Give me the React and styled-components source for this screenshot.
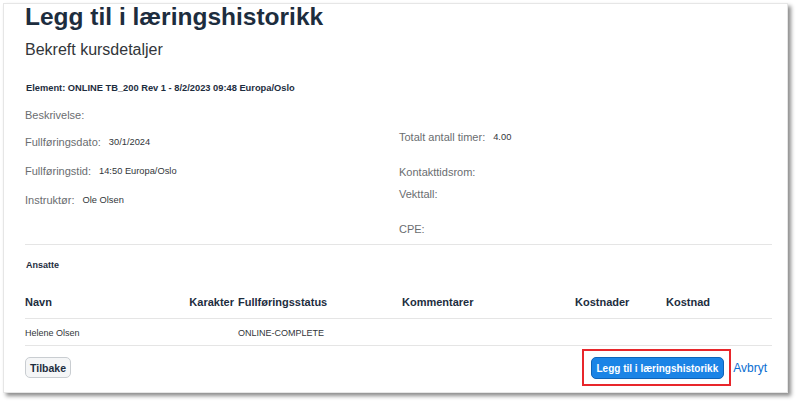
import styled, { createGlobalStyle } from "styled-components";

const GlobalStyle = createGlobalStyle`
  html, body {
    margin: 0;
    padding: 0;
    background: #ffffff;
  }
  body {
    font-family: "Liberation Sans", Arial, sans-serif;
    color: #32363a;
  }
`;

const Page = styled.div`
  width: 800px;
  height: 406px;
  padding: 3px 0 0 3px;
  box-sizing: border-box;
`;

const Card = styled.div`
  width: 785px;
  height: 390px;
  box-sizing: border-box;
  background: #fff;
  border: 1px solid #e6e6e6;
  box-shadow: 3px 3px 4px rgba(0, 0, 0, 0.45);
  padding: 0 15px 0 21px;
  display: flex;
  flex-direction: column;
`;

const Title = styled.h1`
  margin: 0;
  font-size: 24.5px;
  line-height: 26px;
  font-weight: 700;
  color: #1d2d3e;
`;

const Subtitle = styled.h2`
  margin: 10px 0 0;
  font-size: 16px;
  line-height: 20px;
  font-weight: 400;
  color: #32363a;
`;

const SmallHeading = styled.div`
  margin-top: ${(p) => p.$top}px;
  margin-left: 1px;
  font-size: ${(p) => p.$size || 9}px;
  line-height: 12px;
  font-weight: 700;
  color: #1d2d3e;
`;

const Details = styled.div`
  margin-top: 14px;
  display: grid;
  grid-template-columns: 374px 1fr;
  padding-bottom: 8px;
  border-bottom: 1px solid #e5e5e5;
`;

const Column = styled.div`
  display: flex;
  flex-direction: column;
`;

const Field = styled.div`
  margin-top: ${(p) => p.$top || 0}px;
  display: flex;
  align-items: center;
  gap: 8px;
  height: 14px;
`;

const Label = styled.span`
  font-size: 11px;
  color: #6a6d70;
`;

const Value = styled.span`
  font-size: 9.3px;
  color: #32363a;
`;

const Table = styled.div`
  margin-top: 13px;
`;

const Row = styled.div`
  display: grid;
  grid-template-columns: 133px 72px 160px 169px 87px 1fr;
  column-gap: 4px;
  align-items: center;
  height: ${(p) => p.$h}px;
  border-bottom: 1px solid #e5e5e5;
`;

const Th = styled.div`
  font-size: 11px;
  font-weight: 700;
  color: #1d2d3e;
  text-align: ${(p) => (p.$right ? "right" : "left")};
  padding-top: 2px;
`;

const Td = styled.div`
  font-size: 9px;
  color: #32363a;
  padding-top: 2px;
`;

const Footer = styled.div`
  margin-top: 3px;
  display: flex;
  align-items: center;
  justify-content: space-between;
  padding-right: 5px;
`;

const GhostButton = styled.button`
  font-family: inherit;
  font-size: 10.5px;
  font-weight: 700;
  color: #1d2d3e;
  background: #f5f6f7;
  border: 1px solid #c9cdd1;
  border-radius: 5px;
  height: 21px;
  padding: 0 4px;
  cursor: pointer;
`;

const Actions = styled.div`
  display: flex;
  align-items: center;
  gap: 2px;
`;

const Highlight = styled.div`
  border: 2px solid #e8262b;
  padding: 6px 5px 5px 7px;
  display: flex;
`;

const PrimaryButton = styled.button`
  font-family: inherit;
  font-size: 10px;
  font-weight: 700;
  color: #fff;
  background: #1b84e6;
  border: 1px solid #0f64b8;
  border-radius: 5px;
  height: 22px;
  padding: 0 5px;
  cursor: pointer;
`;

const LinkButton = styled.a`
  font-size: 12px;
  color: #0a6ed1;
  text-decoration: none;
  cursor: pointer;
`;

export default function App() {
  return (
    <Page>
      <GlobalStyle />
      <Card>
        <Title>Legg til i læringshistorikk</Title>
        <Subtitle>Bekreft kursdetaljer</Subtitle>
        <SmallHeading $top={22} $size={9.3}>
          Element: ONLINE TB_200 Rev 1 - 8/2/2023 09:48 Europa/Oslo
        </SmallHeading>

        <Details>
          <Column>
            <Field>
              <Label>Beskrivelse:</Label>
            </Field>
            <Field $top={13}>
              <Label>Fullføringsdato:</Label>
              <Value>30/1/2024</Value>
            </Field>
            <Field $top={15}>
              <Label>Fullføringstid:</Label>
              <Value>14:50 Europa/Oslo</Value>
            </Field>
            <Field $top={15}>
              <Label>Instruktør:</Label>
              <Value>Ole Olsen</Value>
            </Field>
          </Column>
          <Column>
            <Field $top={22}>
              <Label>Totalt antall timer:</Label>
              <Value>4.00</Value>
            </Field>
            <Field $top={21}>
              <Label>Kontakttidsrom:</Label>
            </Field>
            <Field $top={8}>
              <Label>Vekttall:</Label>
            </Field>
            <Field $top={21}>
              <Label>CPE:</Label>
            </Field>
          </Column>
        </Details>

        <SmallHeading $top={14}>Ansatte</SmallHeading>

        <Table>
          <Row $h={34}>
            <Th>Navn</Th>
            <Th $right>Karakter</Th>
            <Th>Fullføringsstatus</Th>
            <Th>Kommentarer</Th>
            <Th>Kostnader</Th>
            <Th>Kostnad</Th>
          </Row>
          <Row $h={26}>
            <Td>Helene Olsen</Td>
            <Td />
            <Td>ONLINE-COMPLETE</Td>
            <Td />
            <Td />
            <Td />
          </Row>
        </Table>

        <Footer>
          <GhostButton>Tilbake</GhostButton>
          <Actions>
            <Highlight>
              <PrimaryButton>Legg til i læringshistorikk</PrimaryButton>
            </Highlight>
            <LinkButton>Avbryt</LinkButton>
          </Actions>
        </Footer>
      </Card>
    </Page>
  );
}
